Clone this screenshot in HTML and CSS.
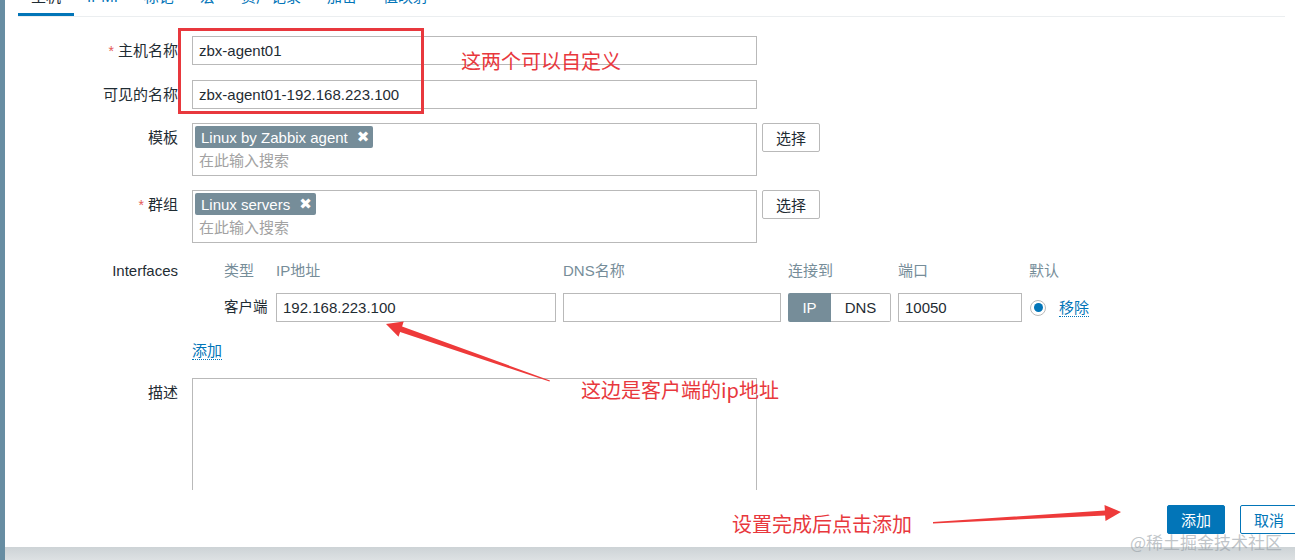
FILE: index.html
```html
<!DOCTYPE html>
<html lang="zh-CN">
<head>
<meta charset="utf-8">
<title>主机</title>
<link rel="stylesheet" href="styles.css">
</head>
<body>
<div class="app">
  <div class="strip"></div>
  <div class="main">
    <div class="panel">
      <nav class="tabs">
        <span class="tab active">主机</span>
        <span class="tab">IPMI</span>
        <span class="tab">标记</span>
        <span class="tab">宏</span>
        <span class="tab">资产记录</span>
        <span class="tab">加密</span>
        <span class="tab">值映射</span>
      </nav>
      <div class="scroll">
        <div class="form">
          <div class="row">
            <div class="lbl"><span class="req">*</span> 主机名称</div>
            <div class="field"><div class="input">zbx-agent01</div></div>
          </div>
          <div class="row">
            <div class="lbl">可见的名称</div>
            <div class="field"><div class="input">zbx-agent01-192.168.223.100</div></div>
          </div>
          <div class="row">
            <div class="lbl">模板</div>
            <div class="field">
              <div class="ms">
                <div class="tags"><span class="tag">Linux by Zabbix agent<span class="x">✖</span></span></div>
                <div class="ph">在此输入搜索</div>
              </div>
              <button class="btn">选择</button>
            </div>
          </div>
          <div class="row">
            <div class="lbl"><span class="req">*</span> 群组</div>
            <div class="field">
              <div class="ms">
                <div class="tags"><span class="tag">Linux servers<span class="x">✖</span></span></div>
                <div class="ph">在此输入搜索</div>
              </div>
              <button class="btn">选择</button>
            </div>
          </div>
          <div class="row iface-row">
            <div class="lbl lbl-short">Interfaces</div>
            <div class="field">
              <div class="iface">
                <div class="hd">类型</div>
                <div class="hd">IP地址</div>
                <div class="hd">DNS名称</div>
                <div class="hd">连接到</div>
                <div class="hd">端口</div>
                <div class="hd">默认</div>
                <div class="type">客户端</div>
                <div class="input ip">192.168.223.100</div>
                <div class="input dns"></div>
                <div class="seg"><span class="seg-on">IP</span><span class="seg-off">DNS</span></div>
                <div class="input port">10050</div>
                <div class="def"><span class="radio"><span class="dot"></span></span><span class="link">移除</span></div>
              </div>
            </div>
          </div>
          <div class="row add-row">
            <div class="lbl"></div>
            <div class="field"><span class="link">添加</span></div>
          </div>
          <div class="row">
            <div class="lbl">描述</div>
            <div class="field"><div class="textarea"></div></div>
          </div>
        </div>
      </div>
      <div class="footer">
        <button class="btn-primary">添加</button>
        <button class="btn-alt">取消</button>
      </div>
    </div>
    <div class="bottom"></div>
  </div>

  <div class="note-box"></div>
  <div class="note note1">这两个可以自定义</div>
  <div class="note note2">这边是客户端的ip地址</div>
  <div class="note note3">设置完成后点击添加</div>
  <svg class="arrows" width="1295" height="560" viewBox="0 0 1295 560">
    <polygon points="386,324 403.7,321.6 402.1,326.4 550,380.5 549.5,381.5 400.1,332 398.5,336.8" fill="#ee3a3a"/>
    <polygon points="1121,512 1104.5,504.9 1104.9,510.4 933,522 933,523.5 1105.1,515.4 1105.5,520.9" fill="#ee3a3a"/>
  </svg>
  <div class="watermark">@稀土掘金技术社区</div>
</div>
</body>
</html>
```

FILE: styles.css
```css
* { box-sizing: border-box; }
html, body { margin: 0; padding: 0; }
body {
  font-family: "Liberation Sans", "Noto Sans CJK SC", sans-serif;
  font-size: 15px;
  color: #1f2c33;
  background: #d5dadd;
}
.app {
  position: relative;
  display: flex;
  width: 1295px;
  height: 560px;
  overflow: hidden;
}
.strip {
  width: 5px;
  flex: none;
  background: #678da2;
}
.main {
  flex: 1;
  display: flex;
  flex-direction: column;
  overflow: hidden;
}
.panel {
  height: 547px;
  background: #fff;
  display: flex;
  flex-direction: column;
}
.bottom {
  flex: 1;
  background: linear-gradient(#cdd3d6, #dde1e3);
}

/* tabs */
.tabs {
  display: flex;
  margin: -12px 10px 0 13px;
  height: 29px;
  border-bottom: 1px solid #ebeef0;
}
.tab {
  padding: 0 13px;
  line-height: 17px;
  color: #0275b8;
  border-bottom: 3px solid transparent;
}
.tab.active {
  color: #1f2c33;
  border-bottom-color: #0275b8;
}

/* form */
.scroll {
  height: 473px;
  overflow: hidden;
}
.form {
  padding-top: 19px;
}
.row {
  display: flex;
  column-gap: 14px;
  margin-bottom: 14px;
}
.lbl {
  width: 173px;
  flex: none;
  text-align: right;
  line-height: 29px;
  white-space: nowrap;
}
.req { color: #e45959; font-size: 14px; }
.field {
  display: flex;
  align-items: flex-start;
}
.input {
  width: 565px;
  height: 29px;
  border: 1px solid #b9b9b9;
  padding: 0 6px;
  line-height: 27px;
  background: #fff;
  white-space: nowrap;
}
.ms {
  width: 565px;
  height: 53px;
  border: 1px solid #b9b9b9;
  padding: 2px;
}
.tags { display: flex; }
.tag {
  display: inline-flex;
  align-items: center;
  height: 22px;
  padding: 0 4px 0 6px;
  background: #768d99;
  color: #fff;
  border-radius: 2px;
}
.tag .x {
  margin-left: 9px;
  font-size: 15px;
  font-family: "DejaVu Sans", sans-serif;
  font-weight: bold;
}
.ph {
  margin-top: 3px;
  padding-left: 4px;
  line-height: 19px;
  color: #a2a2a2;
}
.btn {
  margin-left: 5px;
  width: 58px;
  height: 29px;
  border: 1px solid #b9b9b9;
  border-radius: 2px;
  background: #fff;
  font: inherit;
  color: #1f2c33;
  padding: 0;
}

/* interfaces */
.iface-row { margin-top: 19px; margin-bottom: 20px; }
.iface-row .lbl-short { line-height: 17px; }
.iface {
  margin-left: 32px;
  display: grid;
  grid-template-columns: 45px 280px 218px 103px 124px auto;
  column-gap: 7px;
  row-gap: 14px;
  align-items: center;
}
.hd {
  line-height: 17px;
  color: #768d99;
  white-space: nowrap;
}
.type { line-height: 29px; white-space: nowrap; font-size: 14.5px; }
.iface .input { width: auto; }
.seg {
  display: flex;
  height: 29px;
  line-height: 29px;
}
.seg-on {
  width: 43px;
  text-align: center;
  background: #768d99;
  color: #fff;
  border-radius: 2px 0 0 2px;
}
.seg-off {
  flex: 1;
  text-align: center;
  border: 1px solid #b9b9b9;
  border-left: none;
  border-radius: 0 2px 2px 0;
  line-height: 27px;
}
.def {
  display: flex;
  align-items: center;
  gap: 13px;
  margin-left: 1px;
}
.radio {
  width: 16px;
  height: 16px;
  border: 1px solid #b9b9b9;
  border-radius: 50%;
  display: flex;
  align-items: center;
  justify-content: center;
}
.dot {
  width: 9px;
  height: 9px;
  border-radius: 50%;
  background: #0275b8;
}
.link {
  display: inline-block;
  color: #0275b8;
  line-height: 17px;
  border-bottom: 1px dotted #0275b8;
}
.add-row { margin-bottom: 18px; }
.textarea {
  width: 565px;
  height: 200px;
  border: 1px solid #b9b9b9;
}

/* footer */
.footer {
  height: 57px;
  display: flex;
  justify-content: flex-end;
  align-items: flex-start;
  gap: 15px;
  padding-top: 15px;
  margin-right: -3px;
}
.btn-primary, .btn-alt {
  width: 58px;
  height: 29px;
  border-radius: 2px;
  font: inherit;
  padding: 0;
}
.btn-primary {
  background: #0275b8;
  color: #fff;
  border: 1px solid #0275b8;
}
.btn-alt {
  background: #fff;
  color: #0275b8;
  border: 1px solid #0275b8;
}

/* annotations */
.note-box {
  position: absolute;
  left: 178px;
  top: 28px;
  width: 246px;
  height: 86px;
  border: 3px solid #e8383d;
}
.note {
  position: absolute;
  font-family: "Noto Sans CJK SC", sans-serif;
  font-size: 20px;
  line-height: 22px;
  color: #e8383d;
  white-space: nowrap;
}
.note1 { left: 461px; top: 50px; }
.note2 { left: 581px; top: 379px; }
.note3 { left: 732px; top: 513px; }
.arrows {
  position: absolute;
  left: 0;
  top: 0;
  pointer-events: none;
}
.watermark {
  position: absolute;
  left: 1130px;
  top: 531px;
  font-family: "Noto Sans CJK SC", sans-serif;
  font-size: 17px;
  line-height: 22px;
  color: rgba(150, 158, 165, 0.6);
  white-space: nowrap;
}
```
